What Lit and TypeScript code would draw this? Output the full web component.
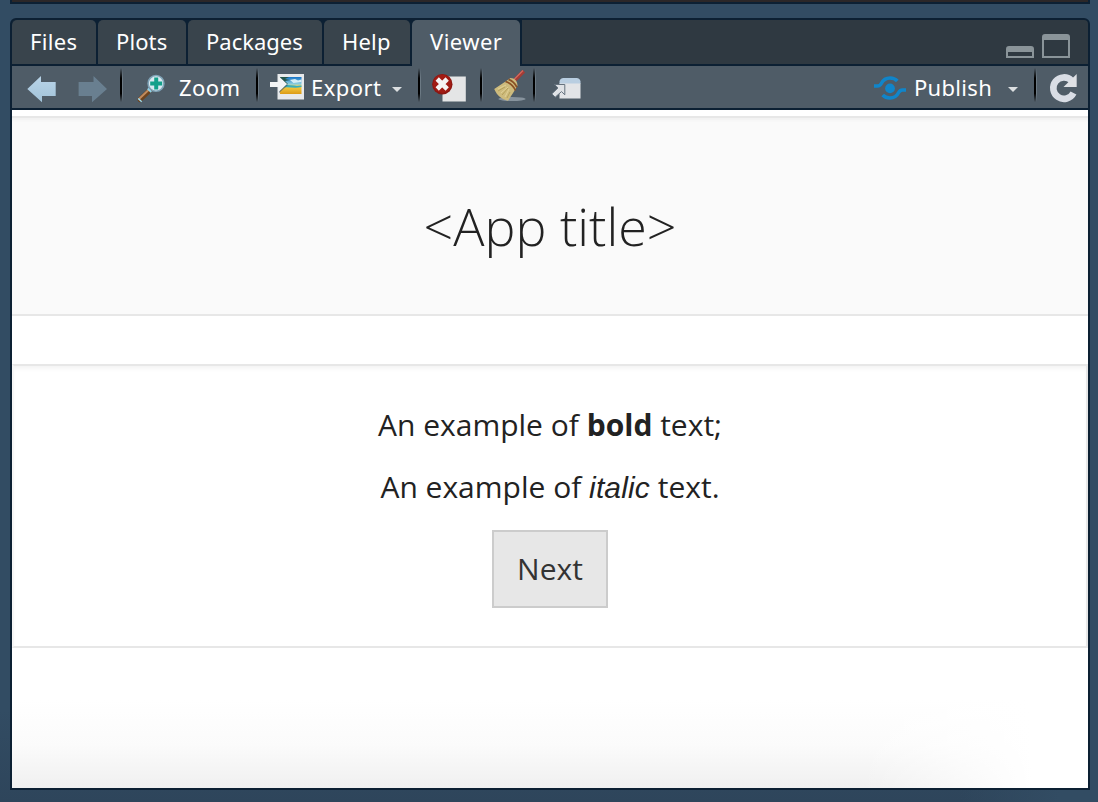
import { LitElement, html, css, svg } from "lit";
import { customElement, property } from "lit/decorators.js";

const SHAPES: Record<string, { x: number; w: number; art: unknown }> = {
  back: { x: 27, w: 30, art: svg`
    <defs><linearGradient id="g" x2="0" y2="1"><stop stop-color="#b9d4e8"/><stop offset="1" stop-color="#a2c3d9"/></linearGradient></defs>
    <path d="M27.300 89 41 76v6h14.700v14H42v6.300z" fill="url(#g)"/>` },
  forward: { x: 78, w: 30, art: svg`
    <path d="M107 89 93.500 76v6H78.600v14H92v6.300z" fill="#697f90"/>` },
  zoom: { x: 137, w: 30, art: svg`
    <path d="m149.500 90.500-9.500 9" stroke="#6d431f" stroke-width="5" stroke-linecap="round"/>
    <path d="m148.500 90-9 8.500" stroke="#c08a5e" stroke-width="2" stroke-linecap="round"/>
    <path d="m138.200 98.500 3.500 3.300" stroke="#9cdcf0" stroke-width="1.500"/>
    <path d="m147.800 88.500 3.500 3.500" stroke="#8ed3ec" stroke-width="2"/>
    <circle cx="156" cy="83.400" r="7.900" fill="#d9e9f1" stroke="#7fa3b7" stroke-width="1.600"/>
    <path d="M154.200 77.500h4v4h4v4h-4v4h-4v-4h-4v-4h4z" fill="#13a08a"/>` },
  export: { x: 270, w: 35, art: svg`
    <defs>
      <linearGradient id="s" x2="0" y2="1"><stop stop-color="#1674c8"/><stop offset=".42" stop-color="#8ed0df"/><stop offset=".55" stop-color="#f5cf45"/><stop offset="1" stop-color="#dc9b16"/></linearGradient>
    </defs>
    <path d="M277.500 74h26.500v25.500h-26.500z" fill="#e7e9eb"/>
    <path d="M280 77h21.500v17H280z" fill="url(#s)"/>
    <path d="M280 77h9l-4 2 5 1-5 1 3 3-8-1z" fill="#24564b"/>
    <path d="m290 80 5-1 3 1.500 3.500-1v2.500l-8 1z" fill="#d5edf6"/>
    <path d="M280 85.500c7-2 13 1.500 21.500 0v1.500c-8 2-13-1-21.500 1z" fill="#36aebc"/>
    <path d="M271 83h8v-6l9 8-9 8v-6h-8z" fill="#40505c" opacity=".6"/>
    <path d="M270 82h8.500v-6l8.500 8-8.500 8v-5H270z" fill="#f3f4f5"/>` },
  clear: { x: 432, w: 35, art: svg`
    <path d="M442.500 76.500h23.300v25h-23.300z" fill="#e4e5e6"/>
    <circle cx="442.300" cy="84.300" r="10.200" fill="#8b1712"/>
    <circle cx="442.300" cy="83.800" r="9.200" fill="#a11b14"/>
    <path d="m437.200 79 10 10m0-10-10 10" stroke="#f6f3f3" stroke-width="4.600"/>` },
  broom: { x: 494, w: 34, art: svg`
    <ellipse cx="513" cy="99" rx="13.500" ry="2" fill="#87939d"/>
    <path d="m515 81 9.800-9.800" stroke="#a43c35" stroke-width="3.800"/>
    <path d="m514 80.500 10-10" stroke="#d26a5f" stroke-width="1.300"/>
    <path d="m506.500 81.500 5-3.500c4 0 7 3 7 7.500l-3.500 6-6 9.200c-6.500-1.500-11-5-13.800-11.700z" fill="#cdbb7d"/>
    <path d="m499 91 7-4m-3 8 6-7m-1 10 3-6" fill="none" stroke="#b5a05a" stroke-width="1"/>
    <path d="m499 89 8-4m-5 8 7-6m-3 10 4-8" fill="none" stroke="#e2d194"/>
    <path d="M506.500 81.500c5 1.500 8 4.500 10 9M509.500 79.300c4 1.500 6.500 4 8.500 8" fill="none" stroke="#8b5125" stroke-width="1.800"/>` },
  popout: { x: 551, w: 31, art: svg`
    <path d="M559.500 83v15.500h21V83z" fill="#e2e4e7"/>
    <path d="M559.500 83.500v-2q.5-3.500 4-3.500h13q3.500 0 4 3.500v2z" fill="#b9cee1"/>
    <path d="M554.500 84.500h10.300v10.300l-3.300-3.200-6.300 5.600-3.400-3.300 6.200-6z" fill="#dfe2e6" stroke="#65727e" stroke-width="1"/>` },
  publish: { x: 873, w: 34, art: svg`
    <circle cx="890" cy="88.400" r="4.900" fill="#1085ca"/>
    <path d="M874 86h3.500c2 0 3-1 3.800-2.500 1.700-3.300 4.500-5.500 8.700-5.500 3.300 0 5.500 1 7.300 3M906 90h-3.500c-2 0-3 1-3.800 2.500-1.700 3.300-4.500 5.500-8.700 5.500-3.300 0-5.500-1-7.300-3" fill="none" stroke="#1085ca" stroke-width="3.600"/>` },
  refresh: { x: 1048, w: 30, art: svg`
    <path d="M1073.500 93a10.700 10.700 0 1 1-2-12.500" fill="none" stroke="#d9dde5" stroke-width="6.600"/>
    <path d="M1076.700 74v13h-13.200z" fill="#dfe1e5"/>` },
  minimize: { x: 1006, w: 28, art: svg`
    <path d="M1006 58V49q0-3 3-3h22q3 0 3 3v9zm2-6v4h24v-4z" fill="#8a9499" fill-rule="evenodd"/>` },
  maximize: { x: 1042, w: 28, art: svg`
    <path d="M1042 58V37q0-3 3-3h22q3 0 3 3v21zm2-18v16h24V40z" fill="#8a9499" fill-rule="evenodd"/>` },
};

@customElement("pane-icon")
class PaneIcon extends LitElement {
  @property() name = "back";
  @property({ type: Number }) top = 66;
  static styles = css`:host { display: block; flex: none; height: 42px; } svg { display: block; }`;
  render() {
    const s = SHAPES[this.name];
    return html`<svg width=${s.w} height="42" viewBox="${s.x} ${this.top} ${s.w} 42">${s.art}</svg>`;
  }
}

@customElement("app-root")
class AppRoot extends LitElement {
  static styles = css`
    :host { display: block; height: 802px; overflow: hidden; background: #324c63; font-family: "Open Sans", sans-serif; }
    * { box-sizing: border-box; }
    .desk { height: 802px; display: flex; flex-direction: column; padding: 0 8px 12px 10px;
      background: linear-gradient(90deg, transparent 960px, #324c63 1060px), linear-gradient(#324c63 710px, #2e455b 802px); }
    .above { height: 4px; margin-bottom: 14px; background: #2b2728; border: solid #0c2033; border-width: 0 2px 2px; }
    .pane { flex: 1; display: flex; flex-direction: column; border: 2px solid #0c2033; border-radius: 6px 6px 0 0; background: #0c2033; overflow: hidden; }
    .tabs { height: 46px; display: flex; background: #2f3941; border-bottom: 2px solid #0c2033; flex: none; }
    .tab { flex: none; height: 44px; border-radius: 5px 5px 0 0; background: #39444c; }
    .slot { background: #0c2033; padding-right: 2px; height: 44px; flex: none; }
    .tab, .label { font: 22px/42px "Noto Sans", sans-serif; color: #fff; white-space: nowrap; letter-spacing: .45px; }
    .tab { padding-left: 18px; }
    .active { background: #4f5c67; height: 46px; }
    .files { width: 84px; letter-spacing: .3px; } .plots { width: 88px; letter-spacing: .1px; }
    .packages { width: 134px; letter-spacing: 0; } .help { width: 86px; letter-spacing: .2px; }
    .viewer { width: 108px; }
    .window { margin-left: auto; display: flex; gap: 8px; padding: 0 18px 0 0; }
    .tools { height: 44px; flex: none; display: flex; background: #4f5c67; border-bottom: 2px solid #0c2033; padding-left: 15px; }
    .label { flex: none; height: 42px; }
    .sep { flex: none; width: 4px; height: 34px; margin-top: 2px;
      background: linear-gradient(90deg, #000 2px, #73818b 2px, #65727d 3px, transparent 3px);
      -webkit-mask: linear-gradient(transparent, #000 30%, #000 75%, transparent); mask: linear-gradient(transparent, #000 30%, #000 75%, transparent); }
    .caret { flex: none; width: 10px; height: 5px; margin-top: 21px; background: #dcdfe1; clip-path: polygon(0 0, 100% 0, 50% 100%); }
    .view { flex: 1; background: linear-gradient(90deg, transparent 850px, #fff 1020px), linear-gradient(#fff 590px, #fbfbfb 635px, #f0f0f0 678px); padding-top: 6px; color: #222; }
    .banner { height: 200px; display: flex; justify-content: center; border: solid #e7e7e7; border-width: 2px 0; background: #fafafa; box-shadow: inset 0 3px 3px -1px #f0f0f0; }
    h1 { margin: 72px 0 0; font-size: 52px; line-height: 72px; font-weight: 300; white-space: nowrap; }
    .card { margin-top: 48px; height: 284px; border: 2px solid #e7e7e7; border-left-color: #f6f6f6; background: #fff; box-shadow: inset 0 4px 5px -2px #f1f1f1;
      display: flex; flex-direction: column; align-items: center; padding-top: 38px; }
    p { margin: 0 0 20px; font-size: 30px; line-height: 42px; white-space: nowrap; }
    i { font-family: "Liberation Sans", sans-serif; letter-spacing: .15px; }
    button { width: 116px; height: 78px; margin-top: 1px; padding: 0; border: 2px solid #ccc; background: #e7e7e7; color: #333; font: 30px/72px "Open Sans", sans-serif; }
    .m5 { margin-left: 5px; } .m6 { margin-left: 6px; } .m9 { margin-left: 9px; } .m10 { margin-left: 10px; } .m12 { margin-left: 12px; } .m13 { margin-left: 13px; } .m14 { margin-left: 14px; } .m16 { margin-left: 16px; } .m21 { margin-left: 21px; }
    .zoom { width: 61px; margin-left: 12px; } .export { width: 76px; margin-left: 6px; } .publish { width: 82px; margin-left: 7px; letter-spacing: .3px; }
    .right { display: flex; margin-left: auto; padding-right: 10px; }
  `;
  render() {
    return html`<div class="desk">
      <div class="above"></div>
      <section class="pane">
        <nav class="tabs">
          ${["Files", "Plots", "Packages", "Help", "Viewer"].map((t) => html`<div class="slot"><div class="tab ${t.toLowerCase()} ${t === "Viewer" ? "active" : ""}">${t}</div></div>`)}
          <div class="window"><pane-icon name="minimize" top="20"></pane-icon><pane-icon name="maximize" top="20"></pane-icon></div>
        </nav>
        <div class="tools">
          <pane-icon name="back"></pane-icon>
          <pane-icon class="m21" name="forward"></pane-icon>
          <div class="sep m12"></div>
          <pane-icon class="m13" name="zoom"></pane-icon>
          <span class="label zoom">Zoom</span>
          <div class="sep m16"></div>
          <pane-icon class="m10" name="export"></pane-icon>
          <span class="label export">Export</span>
          <div class="caret m5"></div>
          <div class="sep m16"></div>
          <pane-icon class="m10" name="clear"></pane-icon>
          <div class="sep m13"></div>
          <pane-icon class="m9" name="broom"></pane-icon>
          <div class="sep m6"></div>
          <pane-icon class="m14" name="popout"></pane-icon>
          <div class="right">
            <pane-icon name="publish"></pane-icon>
            <span class="label publish">Publish</span>
            <div class="caret m12"></div>
            <div class="sep m16"></div>
            <pane-icon class="m10" name="refresh"></pane-icon>
          </div>
        </div>
        <main class="view">
          <header class="banner"><h1>&lt;App title&gt;</h1></header>
          <article class="card">
            <p>An example of <b>bold</b> text;</p>
            <p>An example of <i>italic</i> text.</p>
            <button>Next</button>
          </article>
        </main>
      </section>
    </div>`;
  }
}
